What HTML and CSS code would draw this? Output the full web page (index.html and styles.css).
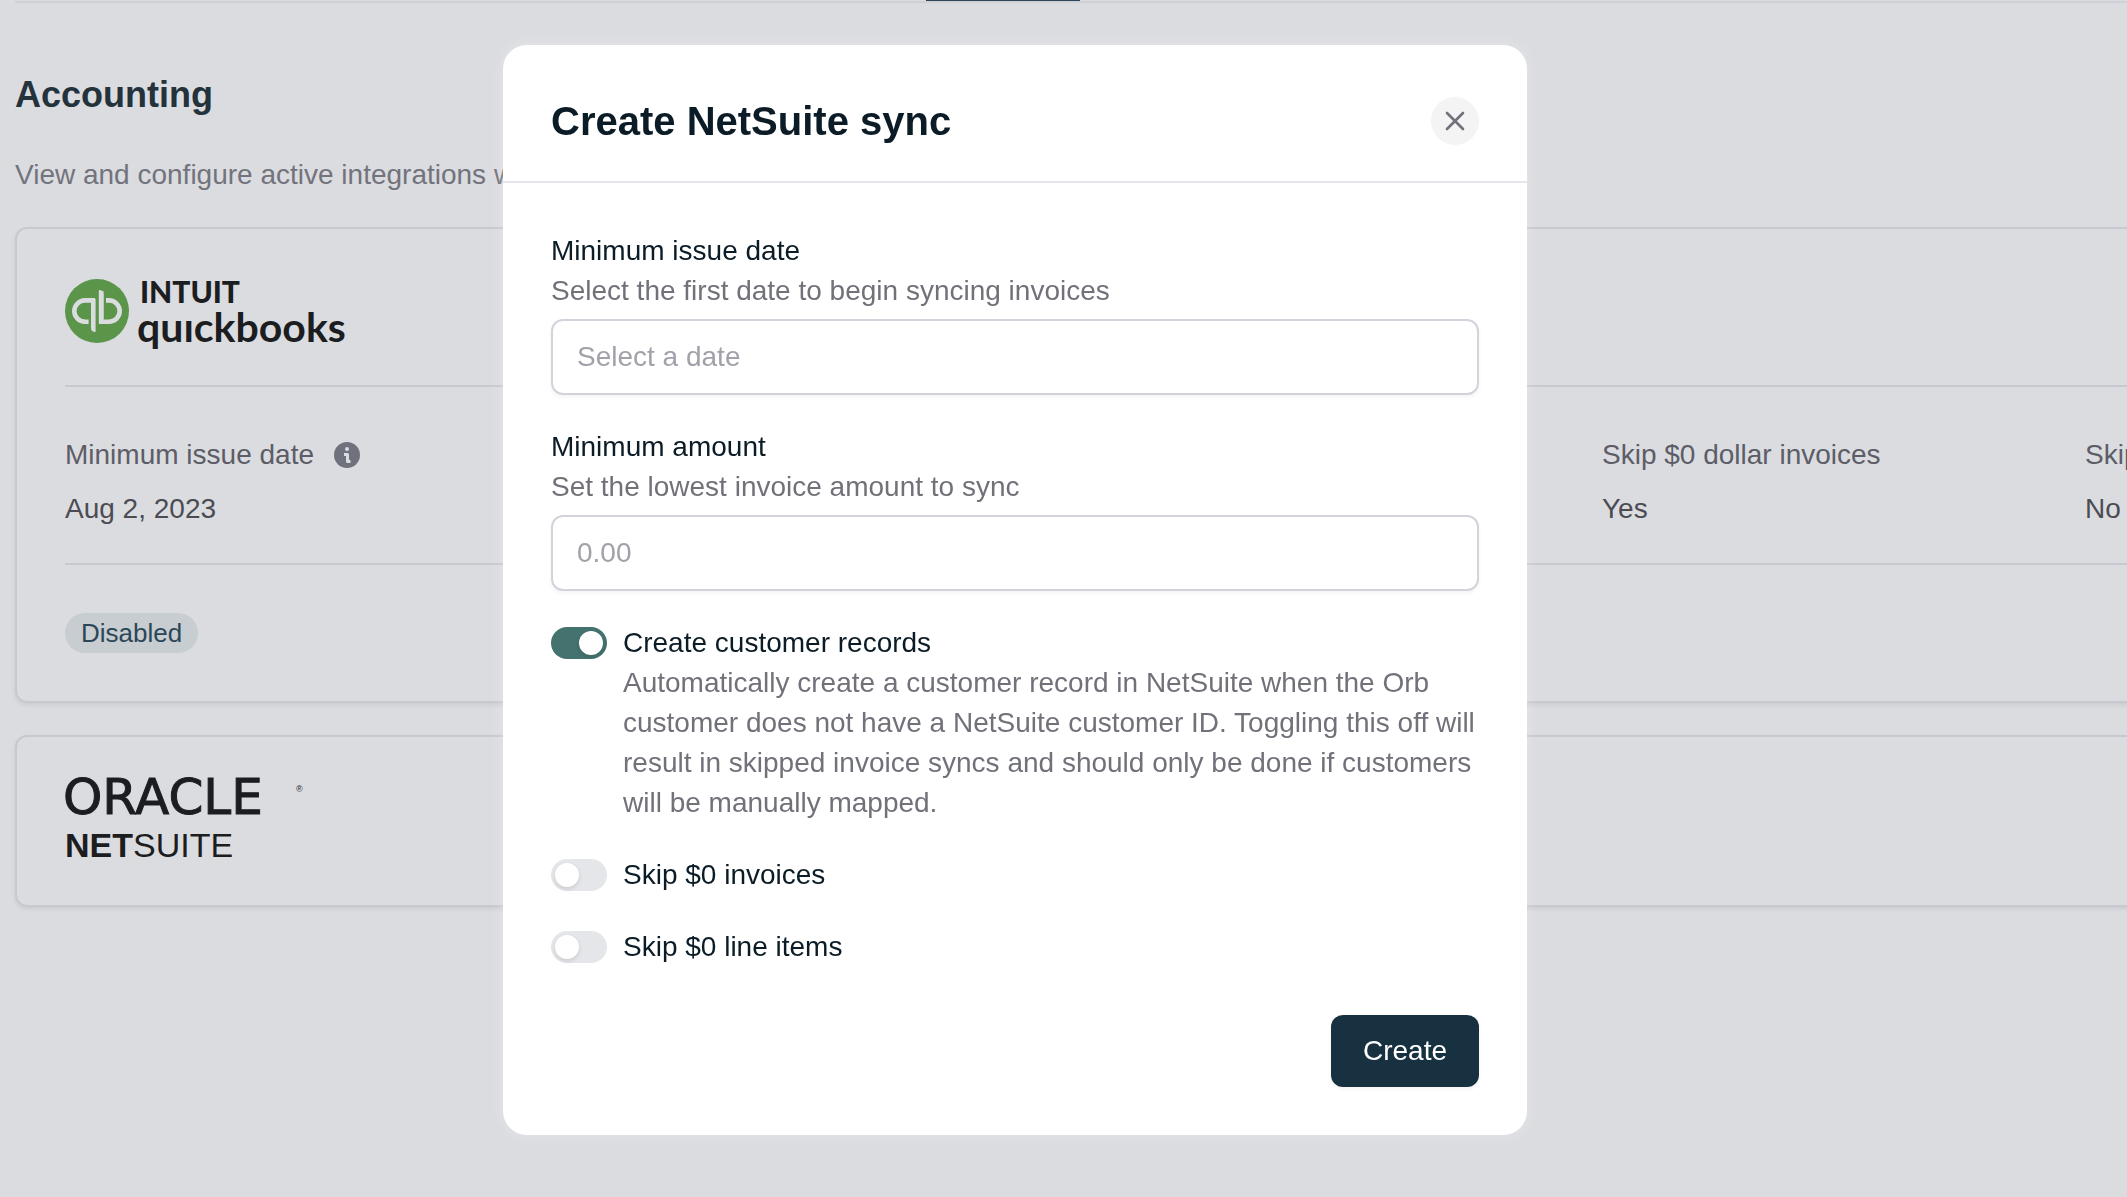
FILE: index.html
```html
<!DOCTYPE html>
<html lang="en">
<head>
  <meta charset="utf-8">
  <meta name="viewport" content="width=device-width, initial-scale=1">
  <title>Create NetSuite sync</title>
  <link rel="stylesheet" href="styles.css">
</head>
<body>
  <main class="page">
    <div class="tabs"><span class="tabs__active"></span></div>
    <h1 class="page__title">Accounting</h1>
    <p class="page__intro">View and configure active integrations with</p>

    <div class="cards">
      <section class="card">
        <div class="card__logo">
          <svg width="290" height="76" viewBox="0 0 290 76" role="img" aria-label="Intuit QuickBooks">
            <circle cx="32" cy="34" r="32" fill="#5b9549"/>
            <g fill="none" stroke="#dbdce0" stroke-width="4.6">
              <path d="M30 23.4H20a10.7 10.7 0 0 0 0 21.4h3.6"/>
              <path d="M36.2 14V44.8H44a10.7 10.7 0 0 0 0-21.4h-3"/>
            </g>
            <path fill="#dbdce0" d="M26 22h4.600v33q-4.600 0-4.600-4.600zM33.900 13q4.600 0 4.600 4.600V46h-4.600z"/>
            <text class="logo-intuit" x="75" y="26">INTUIT</text>
            <text class="logo-quickbooks" x="72" y="65">quıckbooks</text>
          </svg>
        </div>
        <dl class="facts">
          <div class="fact">
            <dt>Minimum issue date
              <svg class="info" width="26" height="26" viewBox="0 0 26 26" aria-hidden="true">
                <circle cx="13" cy="13" r="13" fill="#6f727c"/>
                <circle cx="13" cy="7" r="2" fill="#dbdce0"/>
                <path d="M10 12.500h3.500v7h3" fill="none" stroke="#dbdce0" stroke-width="3" stroke-linejoin="round"/>
              </svg>
            </dt>
            <dd>Aug 2, 2023</dd>
          </div>
          <div class="fact">
            <dt>Skip $0 dollar invoices</dt>
            <dd>Yes</dd>
          </div>
          <div class="fact">
            <dt>Skip</dt>
            <dd>No</dd>
          </div>
        </dl>
        <span class="badge">Disabled</span>
      </section>

      <section class="card">
        <svg width="250" height="72" viewBox="0 0 250 72" role="img" aria-label="Oracle NetSuite">
          <text class="logo-oracle" x="-2" y="29">ORACLE</text>
          <text class="logo-reg" x="231" y="7">®</text>
          <text class="logo-netsuite" x="0" y="72"><tspan class="logo-net">NET</tspan>SUITE</text>
        </svg>
      </section>
    </div>
  </main>

  <div class="overlay">
    <form class="modal" role="dialog" aria-labelledby="modal-title">
      <header class="modal__header">
        <h2 class="modal__title" id="modal-title">Create NetSuite sync</h2>
        <button class="close" type="button" aria-label="Close">
          <svg width="24" height="24" viewBox="0 0 24 24" fill="none" stroke="#71717a" stroke-width="2.600" stroke-linecap="round"><path d="M4 4l16 16M20 4L4 20"/></svg>
        </button>
      </header>

      <div class="modal__body">
        <div class="field">
          <label class="label" for="issue-date">Minimum issue date</label>
          <p class="hint">Select the first date to begin syncing invoices</p>
          <input class="input" id="issue-date" type="text" placeholder="Select a date">
        </div>
        <div class="field">
          <label class="label" for="amount">Minimum amount</label>
          <p class="hint">Set the lowest invoice amount to sync</p>
          <input class="input" id="amount" type="text" placeholder="0.00">
        </div>
        <div class="option">
          <input class="toggle" id="create-records" type="checkbox" role="switch" checked>
          <div>
            <label class="label" for="create-records">Create customer records</label>
            <p class="hint">Automatically create a customer record in NetSuite when the Orb customer does not have a NetSuite customer ID. Toggling this off will result in skipped invoice syncs and should only be done if customers will be manually mapped.</p>
          </div>
        </div>
        <div class="option">
          <input class="toggle" id="skip-invoices" type="checkbox" role="switch">
          <label class="label" for="skip-invoices">Skip $0 invoices</label>
        </div>
        <div class="option">
          <input class="toggle" id="skip-items" type="checkbox" role="switch">
          <label class="label" for="skip-items">Skip $0 line items</label>
        </div>
      </div>

      <footer class="modal__footer">
        <button class="submit" type="submit">Create</button>
      </footer>
    </form>
  </div>
</body>
</html>
```
FILE: styles.css
```css
* { box-sizing: border-box; }

body {
  margin: 0;
  min-height: 100vh;
  background: #dbdce0;
  color: #0b1c27;
  font: 28px/40px "Liberation Sans", Arial, sans-serif;
}

h1, h2, p, dl, dd { margin: 0; }

button, input { font: inherit; }

.page {
  min-height: 100vh;
  padding-left: 15px;
  overflow: hidden;
}

.tabs {
  height: 3px;
  border-bottom: 2px solid #d0d1d6;
}

.tabs__active {
  display: block;
  width: 154px;
  height: 1px;
  margin-left: 911px;
  background: #2b4356;
}

.page__title {
  margin-top: 68px;
  color: #24323c;
  font-size: 36px;
  line-height: 48px;
}

.page__intro {
  margin: 36px 0 32px;
  color: #72737c;
}

/* The cards run on past the right edge of the window. */
.cards {
  display: flex;
  flex-direction: column;
  gap: 32px;
  margin-right: -492px;
}

.card {
  padding: 48px;
  border: 2px solid #c8c9d0;
  border-radius: 12px;
  box-shadow: 0 2px 4px rgba(0, 0, 0, 0.08);
}

.card__logo { padding-bottom: 32px; }

.card svg {
  display: block;
  overflow: visible;
}

.facts {
  display: grid;
  grid-template-columns: 1537fr 483fr 484fr;
  margin-bottom: 48px;
  padding: 48px 0 34px;
  border: solid #c8c9d0;
  border-width: 2px 0;
}

.fact {
  display: flex;
  flex-direction: column;
  gap: 14px;
}

.fact dt {
  display: flex;
  align-items: center;
  gap: 20px;
  color: #5c5d67;
}

.fact dd { color: #4b4c53; }

.badge {
  display: block;
  width: max-content;
  padding: 0 16px;
  border-radius: 20px;
  background: #c7cdd1;
  color: #2b4757;
  font-size: 26px;
}

.card text { fill: #1c1d21; }

.logo-intuit { font: 900 30px Lato, sans-serif; }
.logo-quickbooks { font: 700 41px Lato, sans-serif; }
.logo-oracle {
  font: 50px "DejaVu Sans", sans-serif;
  stroke: #1c1d21;
  stroke-width: 1px;
}
.logo-reg { font: 9px "Liberation Sans", Arial, sans-serif; }
.logo-netsuite { font: 34px "Liberation Sans", Arial, sans-serif; }
.logo-net { font-weight: 700; }

.overlay {
  position: fixed;
  inset: 0;
  display: flex;
  justify-content: center;
  align-items: flex-start;
  padding: 45px 97px 45px 0;
}

.modal {
  width: 100%;
  max-width: 1024px;
  border-radius: 24px;
  background: #fff;
  box-shadow: 0 0 16px rgba(255, 255, 255, 0.3);
}

.modal__header {
  display: flex;
  justify-content: space-between;
  align-items: center;
  padding: 48px 48px 32px;
  border-bottom: 2px solid #e4e4ea;
}

.modal__title {
  font-size: 40px;
  line-height: 56px;
}

.close {
  display: grid;
  place-items: center;
  width: 48px;
  height: 48px;
  padding: 0;
  border: 0;
  border-radius: 50%;
  background: #f4f4f5;
}

.modal__body {
  display: flex;
  flex-direction: column;
  gap: 32px;
  padding: 48px;
}

.label { display: block; }

.hint { color: #71717a; }

.input {
  display: block;
  width: 100%;
  height: 76px;
  margin-top: 8px;
  padding: 0 24px;
  border: 2px solid #d1d5db;
  border-radius: 12px;
  background: #fff;
  box-shadow: 0 2px 4px rgba(0, 0, 0, 0.05);
}

.input::placeholder {
  color: #a1a1aa;
  opacity: 1;
}

.option {
  display: flex;
  align-items: flex-start;
  gap: 16px;
}

.toggle {
  appearance: none;
  display: flex;
  flex: none;
  width: 56px;
  height: 32px;
  margin: 4px 0;
  padding: 4px;
  border-radius: 16px;
  background: #e5e6ea;
}

.toggle::before {
  content: "";
  width: 24px;
  height: 24px;
  border-radius: 50%;
  background: #fff;
  box-shadow: 0 2px 4px rgba(0, 0, 0, 0.12);
}

.toggle:checked {
  justify-content: flex-end;
  background: #44736f;
}

.modal__footer {
  display: flex;
  justify-content: flex-end;
  padding: 0 48px 48px;
}

.submit {
  height: 72px;
  padding: 0 32px;
  border: 0;
  border-radius: 12px;
  background: #183141;
  color: #fff;
  box-shadow: 0 2px 4px rgba(0, 0, 0, 0.05);
}
```
